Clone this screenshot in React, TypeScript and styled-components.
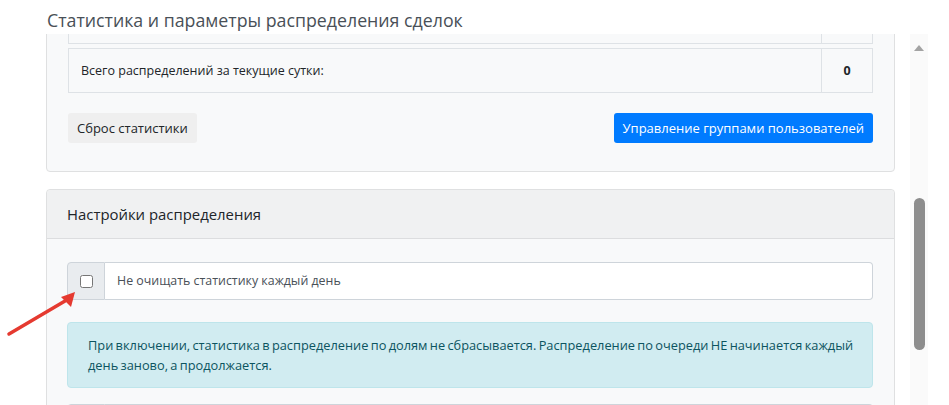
import React, { useLayoutEffect, useRef } from 'react';
import styled, { createGlobalStyle } from 'styled-components';

const GlobalStyle = createGlobalStyle`
  html, body {
    margin: 0;
    padding: 0;
    background: #fff;
  }
  body {
    font-family: "Open Sans", "Noto Sans", sans-serif;
    color: #212529;
  }
  * {
    box-sizing: border-box;
  }
`;

const Page = styled.div`
  position: relative;
  width: 949px;
  height: 405px;
  display: flex;
  flex-direction: column;
  overflow: hidden;
`;

const Title = styled.h4`
  margin: 0;
  height: 34px;
  padding: 6px 0 0 47px;
  font-size: 17.75px;
  font-weight: 400;
  line-height: 28px;
  color: #495057;
  white-space: nowrap;
`;

const Body = styled.div`
  flex: 1;
  min-height: 0;
  display: flex;
`;

const ScrollArea = styled.div`
  position: relative;
  flex: 1;
  overflow: hidden;
  padding: 0 15px 0 46px;
`;

const Scrollbar = styled.div`
  width: 18px;
  background: #fafafa;
  display: flex;
  flex-direction: column;
  align-items: center;
`;

const ScrollArrow = styled.div`
  margin-top: 11px;
  width: 0;
  height: 0;
  border-left: 5px solid transparent;
  border-right: 5px solid transparent;
  border-bottom: 6px solid #a3a3a3;
`;

const ScrollThumb = styled.div`
  margin-top: 147px;
  width: 11px;
  height: 152px;
  border-radius: 6px;
  background: #8d8d8d;
`;

const Gutter = styled.div`
  width: 21px;
`;

const Card = styled.div`
  background: #f8f9fa;
  border: 1px solid #dfe0e1;
  border-radius: 4px;
  & + & {
    margin-top: 17px;
  }
`;

const CardHeader = styled.div`
  padding: 12px 20px;
  font-size: 14.9px;
  line-height: 24px;
  background: #f0f1f2;
  border-bottom: 1px solid #dcdddf;
  border-radius: 4px 4px 0 0;
`;

const CardBody = styled.div<{ $pad: string }>`
  padding: ${p => p.$pad};
`;

const StatRow = styled.div`
  display: grid;
  grid-template-columns: 1fr 51px;
  border: 1px solid #dee2e6;
  font-size: 12.5px;
  line-height: 43px;
  margin-bottom: 4px;
`;

const StatLabel = styled.div`
  padding: 0 12px;
`;

const StatValue = styled.div`
  border-left: 1px solid #dee2e6;
  text-align: center;
  font-weight: 700;
`;

const ButtonRow = styled.div`
  display: flex;
  justify-content: space-between;
  margin-top: 20px;
`;

const Button = styled.button<{ $primary?: boolean }>`
  height: 30px;
  padding: 0 9px;
  border: none;
  border-radius: 3px;
  font-family: inherit;
  font-size: 13px;
  line-height: 30px;
  background: ${p => (p.$primary ? '#007bff' : '#efefef')};
  color: ${p => (p.$primary ? '#fff' : '#212529')};
  cursor: pointer;
`;

const InputGroup = styled.div`
  display: flex;
  height: 38px;
  margin-bottom: 22px;
`;

const Prepend = styled.div`
  width: 38px;
  display: flex;
  align-items: center;
  justify-content: center;
  background: #e9ecef;
  border: 1px solid #ced4da;
  border-radius: 4px 0 0 4px;

  input {
    margin: 0;
    width: 13px;
    height: 13px;
  }
`;

const InputText = styled.div`
  flex: 1;
  padding: 0 12px;
  background: #fff;
  border: 1px solid #ced4da;
  border-left: none;
  border-radius: 0 4px 4px 0;
  font-size: 12.4px;
  line-height: 36px;
  color: #495057;
`;

const Alert = styled.div`
  padding: 12px 2px 12px 20px;
  margin-bottom: 16px;
  background: #d1ecf1;
  border: 1px solid #bee5eb;
  border-radius: 4px;
  color: #0c5460;
  font-size: 12.8px;
  line-height: 20px;
  word-spacing: -1px;
`;

const Pointer = styled.svg`
  position: absolute;
  left: 0;
  top: 280px;
  pointer-events: none;
`;

const upperRows = [
  { label: 'Распределено по долям:', value: 0 },
];

const App: React.FC = () => {
  const scrollRef = useRef<HTMLDivElement>(null);
  const lastRowRef = useRef<HTMLDivElement>(null);

  // the panel is shown scrolled so the last stats row sits just under the title
  useLayoutEffect(() => {
    if (scrollRef.current && lastRowRef.current) {
      scrollRef.current.scrollTop = lastRowRef.current.offsetTop - 14;
    }
  }, []);

  return (
    <Page>
      <GlobalStyle />
      <Title>Статистика и параметры распределения сделок</Title>
      <Body>
        <ScrollArea ref={scrollRef}>
          <Card>
            <CardBody $pad="21px 21px 28px 21px">
              {upperRows.map(r => (
                <StatRow key={r.label}>
                  <StatLabel>{r.label}</StatLabel>
                  <StatValue>{r.value}</StatValue>
                </StatRow>
              ))}
              <StatRow ref={lastRowRef}>
                <StatLabel>Всего распределений за текущие сутки:</StatLabel>
                <StatValue>0</StatValue>
              </StatRow>
              <ButtonRow>
                <Button>Сброс статистики</Button>
                <Button $primary>Управление группами пользователей</Button>
              </ButtonRow>
            </CardBody>
          </Card>

          <Card>
            <CardHeader>Настройки распределения</CardHeader>
            <CardBody $pad="23px 21px 20px 20px">
              <InputGroup>
                <Prepend>
                  <input type="checkbox" />
                </Prepend>
                <InputText>Не очищать статистику каждый день</InputText>
              </InputGroup>
              <Alert>
                При включении, статистика в распределение по долям не сбрасывается. Распределение по очереди НЕ начинается каждый день заново, а продолжается.
              </Alert>
              <InputGroup>
                <Prepend>
                  <input type="checkbox" />
                </Prepend>
                <InputText>Распределять сделки только рабочим пользователям</InputText>
              </InputGroup>
            </CardBody>
          </Card>
        </ScrollArea>
        <Scrollbar>
          <ScrollArrow />
          <ScrollThumb />
        </Scrollbar>
        <Gutter />
      </Body>

      <Pointer width="90" height="60" viewBox="0 0 90 60">
        <line x1="9" y1="54" x2="65" y2="21" stroke="#e53a30" strokeWidth="3.5" strokeLinecap="round" />
        <polygon points="75,12 61,17 71,27" fill="#e53a30" />
      </Pointer>
    </Page>
  );
};

export default App;
